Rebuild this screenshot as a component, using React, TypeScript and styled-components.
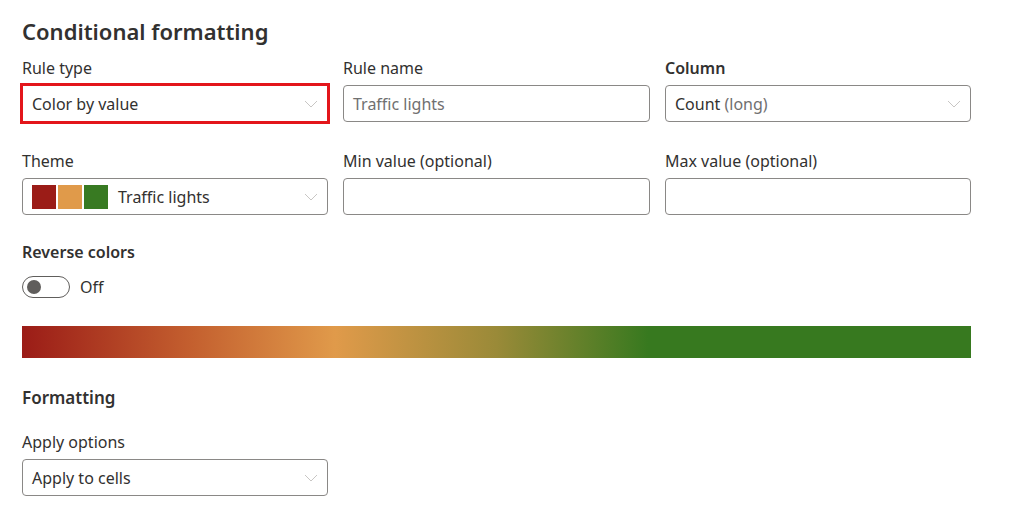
import React from 'react';
import styled, { createGlobalStyle } from 'styled-components';

const GlobalStyle = createGlobalStyle`
  html, body {
    margin: 0;
    padding: 0;
    background: #ffffff;
  }
  body {
    font-family: "Segoe UI", "Noto Sans", "Open Sans", sans-serif;
    color: #323130;
  }
`;

const Page = styled.div`
  width: 949px;
  padding: 14px 0 0 22px;
  display: flex;
  flex-direction: column;
`;

const Title = styled.h2`
  margin: 0 0 9px 0;
  font-size: 22px;
  font-weight: 600;
  line-height: 34px;
  color: #323130;
`;

const Grid = styled.div`
  display: grid;
  grid-template-columns: 306px 307px 306px;
  column-gap: 15px;
  row-gap: 28px;
`;

const Field = styled.div`
  display: flex;
  flex-direction: column;
  gap: 6px;
`;

const Label = styled.label<{ $strong?: boolean }>`
  font-size: 16px;
  line-height: 22px;
  font-weight: ${p => (p.$strong ? 600 : 400)};
  color: #323130;
`;

const Box = styled.div<{ $highlight?: boolean }>`
  height: 37px;
  box-sizing: border-box;
  border: 1px solid ${p => (p.$highlight ? '#e3161b' : '#8a8886')};
  border-radius: 4px;
  display: flex;
  align-items: center;
  padding: 0 9px;
  gap: 10px;
  font-size: 16px;
  color: #323130;
  background: #fff;
  ${p =>
    p.$highlight &&
    `
    border-radius: 0;
    outline: 2px solid #e3161b;
  `}
`;

const Value = styled.span`
  flex: 1;
  white-space: nowrap;
`;

const Muted = styled.span`
  color: #707070;
`;

const Placeholder = styled.span`
  flex: 1;
  color: #707070;
`;

const Swatches = styled.div`
  display: flex;
  gap: 2px;
`;

const Swatch = styled.span<{ $color: string }>`
  width: 24px;
  height: 24px;
  background: ${p => p.$color};
`;

const Chevron = () => (
  <svg width="14" height="8" viewBox="0 0 14 8" fill="none">
    <path d="M1 1l6 6 6-6" stroke="#c8c6c4" strokeWidth="1" />
  </svg>
);

const Section = styled.div`
  margin-top: 26px;
  display: flex;
  flex-direction: column;
`;

const ToggleRow = styled.div`
  display: flex;
  align-items: center;
  gap: 10px;
  margin-top: 13px;
  height: 22px;
`;

const Track = styled.span`
  width: 48px;
  height: 22px;
  box-sizing: border-box;
  border: 1px solid #605e5c;
  border-radius: 11px;
  display: flex;
  align-items: center;
  padding-left: 4px;
`;

const Knob = styled.span`
  width: 14px;
  height: 14px;
  border-radius: 50%;
  background: #605e5c;
`;

const ToggleText = styled.span`
  font-size: 16px;
  color: #323130;
`;

const GradientBar = styled.div`
  margin-top: 28px;
  width: 949px;
  height: 32px;
  background: linear-gradient(
    to right,
    #9b1c17 0%,
    #c4602f 18%,
    #e09a4a 33%,
    #9a8a38 50%,
    #37791f 66%,
    #37791f 100%
  );
`;

const SubHeading = styled.h3`
  margin: 28px 0 21px 0;
  font-size: 17px;
  line-height: 24px;
  font-weight: 600;
  color: #323130;
`;

const SingleField = styled(Field)`
  width: 306px;
`;

export default function App() {
  return (
    <>
      <GlobalStyle />
      <Page>
        <Title>Conditional formatting</Title>
        <Grid>
          <Field>
            <Label>Rule type</Label>
            <Box $highlight>
              <Value>Color by value</Value>
              <Chevron />
            </Box>
          </Field>
          <Field>
            <Label>Rule name</Label>
            <Box>
              <Placeholder>Traffic lights</Placeholder>
            </Box>
          </Field>
          <Field>
            <Label $strong>Column</Label>
            <Box>
              <Value>
                Count <Muted>(long)</Muted>
              </Value>
              <Chevron />
            </Box>
          </Field>
          <Field>
            <Label>Theme</Label>
            <Box>
              <Swatches>
                <Swatch $color="#9b1c17" />
                <Swatch $color="#e09a4a" />
                <Swatch $color="#387a22" />
              </Swatches>
              <Value>Traffic lights</Value>
              <Chevron />
            </Box>
          </Field>
          <Field>
            <Label>Min value (optional)</Label>
            <Box />
          </Field>
          <Field>
            <Label>Max value (optional)</Label>
            <Box />
          </Field>
        </Grid>
        <Section>
          <Label $strong>Reverse colors</Label>
          <ToggleRow>
            <Track>
              <Knob />
            </Track>
            <ToggleText>Off</ToggleText>
          </ToggleRow>
        </Section>
        <GradientBar />
        <SubHeading>Formatting</SubHeading>
        <SingleField>
          <Label>Apply options</Label>
          <Box>
            <Value>Apply to cells</Value>
            <Chevron />
          </Box>
        </SingleField>
      </Page>
    </>
  );
}
